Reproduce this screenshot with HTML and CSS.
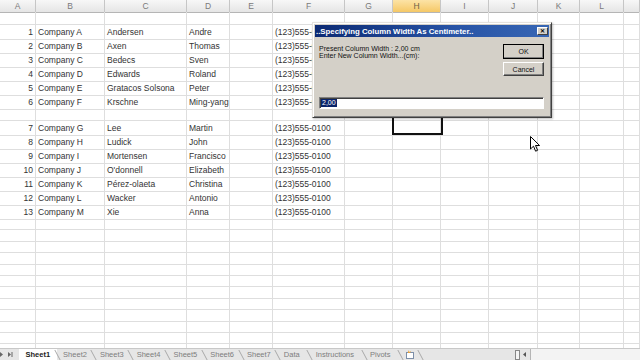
FILE: index.html
```html
<!DOCTYPE html>
<html lang="en">

<head>
    <meta charset="UTF-8">
    <meta name="viewport" content="width=device-width, initial-scale=1.0">
    <title>Column width</title>
    <link rel="stylesheet" href="styles.css">
</head>

<body>
    <div class="screen">
        <div class="grid">
            <div class="row head">
                <div>A</div><div>B</div><div>C</div><div>D</div><div>E</div><div>F</div><div>G</div>
                <div class="on">H</div><div>I</div><div>J</div><div>K</div><div>L</div><div></div>
            </div>
            <div class="row blank">
                <div></div><div></div><div></div><div></div><div></div><div></div><div></div><div></div><div></div><div></div><div></div><div></div><div></div>
            </div>
            <div class="row">
                <div class="num">1</div><div>Company A</div><div>Andersen</div><div>Andre</div><div></div><div>(123)555-0100</div>
                <div></div><div></div><div></div><div></div><div></div><div></div><div></div>
            </div>
            <div class="row">
                <div class="num">2</div><div>Company B</div><div>Axen</div><div>Thomas</div><div></div><div>(123)555-0100</div>
                <div></div><div></div><div></div><div></div><div></div><div></div><div></div>
            </div>
            <div class="row">
                <div class="num">3</div><div>Company C</div><div>Bedecs</div><div>Sven</div><div></div><div>(123)555-0100</div>
                <div></div><div></div><div></div><div></div><div></div><div></div><div></div>
            </div>
            <div class="row">
                <div class="num">4</div><div>Company D</div><div>Edwards</div><div>Roland</div><div></div><div>(123)555-0100</div>
                <div></div><div></div><div></div><div></div><div></div><div></div><div></div>
            </div>
            <div class="row">
                <div class="num">5</div><div>Company E</div><div>Gratacos Solsona</div><div>Peter</div><div></div><div>(123)555-0100</div>
                <div></div><div></div><div></div><div></div><div></div><div></div><div></div>
            </div>
            <div class="row">
                <div class="num">6</div><div>Company F</div><div>Krschne</div><div>Ming-yang</div><div></div><div>(123)555-0100</div>
                <div></div><div></div><div></div><div></div><div></div><div></div><div></div>
            </div>
            <div class="row gap">
                <div></div><div></div><div></div><div></div><div></div><div></div><div></div><div></div><div></div><div></div><div></div><div></div><div></div>
            </div>
            <div class="row">
                <div class="num">7</div><div>Company G</div><div>Lee</div><div>Martin</div><div></div><div>(123)555-0100</div>
                <div></div><div></div><div></div><div></div><div></div><div></div><div></div>
            </div>
            <div class="row">
                <div class="num">8</div><div>Company H</div><div>Ludick</div><div>John</div><div></div><div>(123)555-0100</div>
                <div></div><div></div><div></div><div></div><div></div><div></div><div></div>
            </div>
            <div class="row">
                <div class="num">9</div><div>Company I</div><div>Mortensen</div><div>Francisco</div><div></div><div>(123)555-0100</div>
                <div></div><div></div><div></div><div></div><div></div><div></div><div></div>
            </div>
            <div class="row">
                <div class="num">10</div><div>Company J</div><div>O'donnell</div><div>Elizabeth</div><div></div><div>(123)555-0100</div>
                <div></div><div></div><div></div><div></div><div></div><div></div><div></div>
            </div>
            <div class="row">
                <div class="num">11</div><div>Company K</div><div>Pérez-olaeta</div><div>Christina</div><div></div><div>(123)555-0100</div>
                <div></div><div></div><div></div><div></div><div></div><div></div><div></div>
            </div>
            <div class="row">
                <div class="num">12</div><div>Company L</div><div>Wacker</div><div>Antonio</div><div></div><div>(123)555-0100</div>
                <div></div><div></div><div></div><div></div><div></div><div></div><div></div>
            </div>
            <div class="row">
                <div class="num">13</div><div>Company M</div><div>Xie</div><div>Anna</div><div></div><div>(123)555-0100</div>
                <div></div><div></div><div></div><div></div><div></div><div></div><div></div>
            </div>
            <div class="row filler">
                <div></div><div></div><div></div><div></div><div></div><div></div><div></div><div></div><div></div><div></div><div></div><div></div><div></div>
            </div>
        </div>

        <div class="tabs">
            <svg class="nav" width="19" height="11" viewBox="0 0 19 11">
                <path d="M0 3 L3 5.5 L0 8 Z" fill="#666" />
                <path d="M8 3 L11 5.5 L8 8 Z" fill="#666" />
                <rect x="11.5" y="3" width="1" height="5" fill="#666" />
            </svg>
            <span class="tab active">Sheet1</span>
            <span class="tab">Sheet2</span>
            <span class="tab">Sheet3</span>
            <span class="tab">Sheet4</span>
            <span class="tab">Sheet5</span>
            <span class="tab">Sheet6</span>
            <span class="tab">Sheet7</span>
            <span class="tab wide">Data</span>
            <span class="tab wide">Instructions</span>
            <span class="tab wide">Pivots</span>
            <span class="tab add">
                <svg width="10" height="9" viewBox="0 0 10 9">
                    <rect x="1.5" y="2.5" width="7" height="6" fill="#fff" stroke="#7d8fa8" />
                    <path d="M3 0 L4 2 L6 1 L5 3 L3 3 Z" fill="#e8a33c" />
                </svg>
            </span>
            <div class="tabs-end">
                <span class="split"></span>
                <svg width="6" height="11" viewBox="0 0 6 11"><path d="M4 3 L1 5.5 L4 8 Z" fill="#555" /></svg>
                <span class="track"></span>
            </div>
        </div>

        <div class="selection"></div>

        <div class="dialog">
            <div class="title">
                <span>..Specifying Column Width As Centimeter..</span>
                <span class="close">✕</span>
            </div>
            <div class="dlg-body">
                <div class="dlg-top">
                    <div class="labels">
                        <p>Present Column Width : 2,00 cm</p>
                        <p>Enter New Column Width...(cm):</p>
                    </div>
                    <div class="buttons">
                        <button class="btn default">OK</button>
                        <button class="btn">Cancel</button>
                    </div>
                </div>
                <div class="field"><span class="picked">2,00</span></div>
            </div>
        </div>

        <svg class="cursor" width="11" height="17" viewBox="0 0 11 17">
            <path d="M0.5 0.5 L0.5 13 L3.5 10.2 L5.6 15.2 L7.6 14.3 L5.5 9.5 L9.6 9.5 Z" fill="#fff" stroke="#000" stroke-width="1" stroke-linejoin="round" />
        </svg>
    </div>
</body>

</html>
```

FILE: styles.css
```css
body {
    margin: 0;
    font-family: 'Liberation Sans', Arial, sans-serif;
    background: #fff;
}

.screen {
    position: relative;
    width: 640px;
    height: 360px;
    overflow: hidden;
    background: #fff;
}

/* sheet grid */
.row {
    display: grid;
    grid-template-columns: 36px 69px 82px 43px 43px 72px 48px 48px 48px 49px 42px 44px 1fr;
    height: 14px;
}

.row > div {
    box-sizing: border-box;
    border-right: 1px solid #dedede;
    border-bottom: 1px solid #dedede;
    padding: 0 2px;
    font-size: 8.5px;
    line-height: 14px;
    color: #333;
    white-space: nowrap;
}

.row .num {
    text-align: right;
}

.head {
    height: 12px;
    background: linear-gradient(#f7f7f7, #e5e5e5);
}

.head > div {
    border-color: #c6c6c6;
    border-bottom-color: #b5b5b5;
    text-align: center;
    line-height: 12px;
    color: #7a7a7a;
}

.head .on {
    background: linear-gradient(#fce3a6, #f5c866);
    color: #6b6248;
}

.row.blank {
    height: 13px;
}

.row.gap {
    height: 12px;
}

.row.filler {
    height: 129px;
}

.row.filler > div {
    border-bottom: none;
    background: repeating-linear-gradient(to bottom, transparent 0, transparent 10.4px, #dedede 10.4px, #dedede 11.4px);
}

/* sheet tabs */
.tabs {
    display: flex;
    align-items: center;
    height: 11px;
    border-top: 1px solid #c8c8c8;
    background: #e6e6e6;
    font-size: 7.5px;
    color: #7d7d7d;
}

.nav {
    width: 19px;
    flex: none;
}

.tab {
    position: relative;
    height: 11px;
    line-height: 11px;
    padding: 0 6.5px;
}

.tab.wide {
    padding-right: 9.5px;
}

.tab::after {
    content: "";
    position: absolute;
    right: -1px;
    top: 1px;
    height: 10px;
    border-right: 1px solid #a9a9a9;
    transform: skewX(28deg);
}

.tab.active {
    background: #fff;
    color: #222;
    font-weight: bold;
}

.tab.add {
    display: flex;
    align-items: center;
    padding: 0 5px;
}

.tabs-end {
    margin-left: auto;
    display: flex;
    align-items: center;
    width: 125px;
    height: 11px;
}

.split {
    width: 3px;
    height: 8px;
    margin-right: 2px;
    border: 1px solid #888;
    background: #f4f4f4;
}

.track {
    flex: 1;
    height: 11px;
    margin-left: 2px;
    border-left: 1px solid #b5b5b5;
    background: #f3f3f3;
}

/* active cell outline, under the dialog */
.selection {
    position: absolute;
    left: 392px;
    top: 108px;
    width: 47px;
    height: 23px;
    border: 2px solid #111;
}

/* dialog */
.dialog {
    position: absolute;
    left: 312px;
    top: 22px;
    width: 240px;
    height: 96px;
    box-sizing: border-box;
    padding: 2px;
    background: #d4d0c8;
    border: 1px solid;
    border-color: #e6e3de #404040 #404040 #e6e3de;
    box-shadow: inset 1px 1px #fff, inset -1px -1px #808080, 1px 1px 2px rgba(0, 0, 0, 0.25);
    font-size: 7px;
    color: #111;
}

.title {
    display: flex;
    align-items: center;
    justify-content: space-between;
    height: 12px;
    padding: 0 1px 0 1px;
    background: linear-gradient(90deg, #0c2a73, #2854a6 60%, #3766b4);
    color: #fff;
    font-weight: bold;
    font-size: 7.8px;
}

.close {
    width: 11px;
    height: 8px;
    box-sizing: border-box;
    background: #d4d0c8;
    border: 1px solid;
    border-color: #fff #404040 #404040 #fff;
    color: #000;
    font-size: 6px;
    line-height: 6px;
    text-align: center;
    font-weight: bold;
}

.dlg-body {
    padding: 7px 5px 0 4px;
}

.dlg-top {
    display: flex;
    justify-content: space-between;
}

.labels {
    padding-top: 2px;
}

.labels p {
    margin: 0;
    line-height: 6.5px;
}

.buttons {
    display: flex;
    flex-direction: column;
    gap: 3px;
}

.btn {
    width: 41px;
    height: 14px;
    padding: 0;
    box-sizing: border-box;
    background: #d4d0c8;
    border: 1px solid;
    border-color: #fff #404040 #404040 #fff;
    box-shadow: inset -1px -1px #808080;
    font-family: inherit;
    font-size: 7px;
    color: #111;
}

.btn.default {
    height: 15px;
    outline: 1px solid #000;
    outline-offset: -1px;
}

.field {
    margin-top: 21px;
    height: 12px;
    box-sizing: border-box;
    padding: 1px 1px;
    background: #fff;
    border: 1px solid;
    border-color: #808080 #fff #fff #808080;
    box-shadow: inset 1px 1px #404040;
    font-size: 7px;
    line-height: 8px;
}

.picked {
    display: inline-block;
    padding: 0 1px;
    background: #0a246a;
    color: #fff;
}

.cursor {
    position: absolute;
    left: 530px;
    top: 136px;
}
```
